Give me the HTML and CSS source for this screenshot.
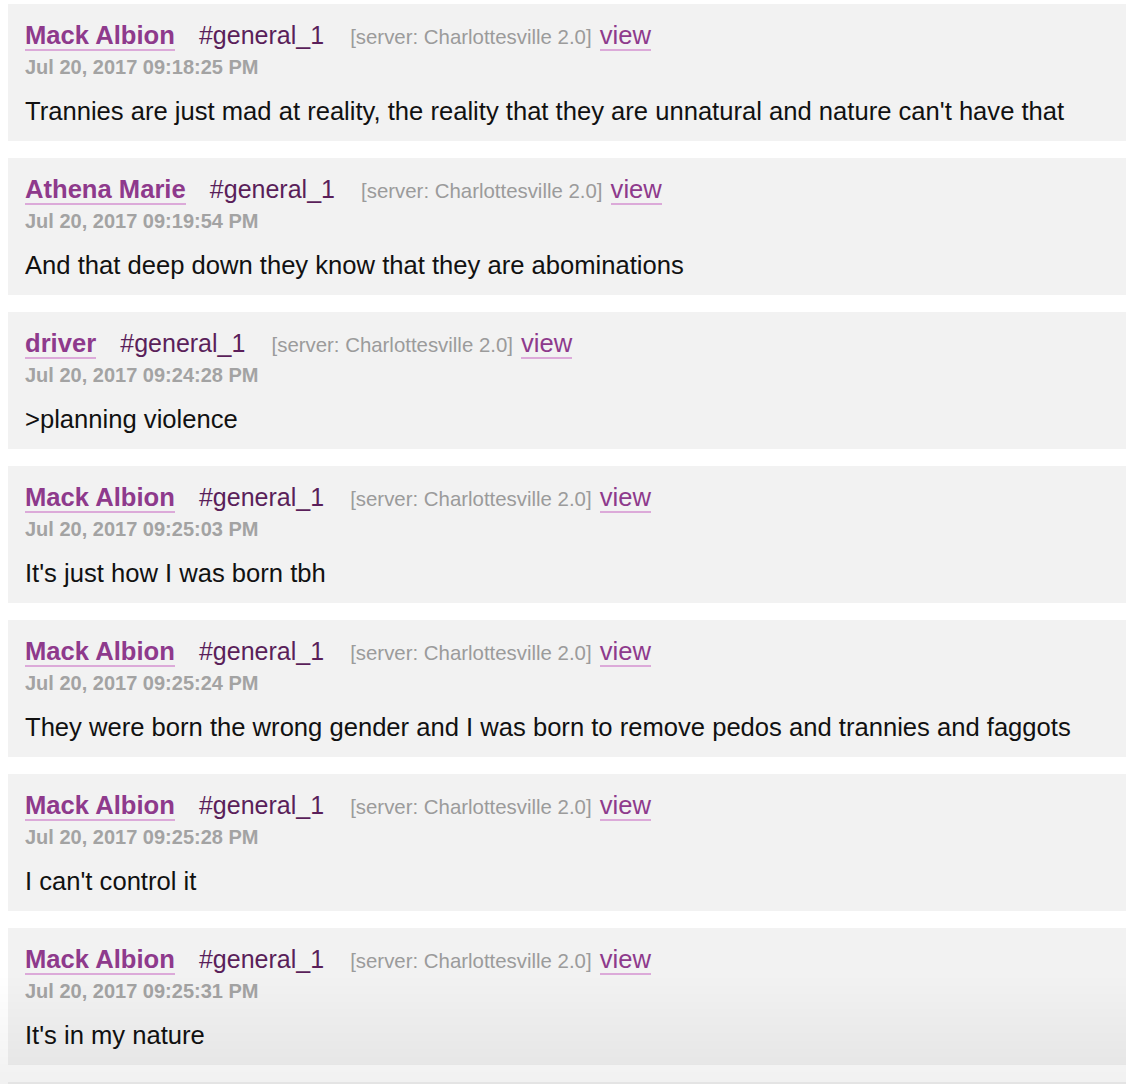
FILE: index.html
```html
<!DOCTYPE html>
<html lang="en">
<head>
    <meta charset="UTF-8">
    <meta name="viewport" content="width=device-width, initial-scale=1.0">
    <title>Discord leaks - #general_1</title>
    <link rel="stylesheet" href="styles.css">
</head>
<body>
    <div class="messages">
        <div class="msg">
            <div class="msg-head">
                <a class="author" href="#">Mack Albion</a>
                <span class="channel">#general_1</span>
                <span class="server">[server: Charlottesville 2.0]</span>
                <a class="view" href="#">view</a>
            </div>
            <div class="date">Jul 20, 2017 09:18:25 PM</div>
            <div class="body">Trannies are just mad at reality, the reality that they are unnatural and nature can't have that</div>
        </div>

        <div class="msg">
            <div class="msg-head">
                <a class="author" href="#">Athena Marie</a>
                <span class="channel">#general_1</span>
                <span class="server">[server: Charlottesville 2.0]</span>
                <a class="view" href="#">view</a>
            </div>
            <div class="date">Jul 20, 2017 09:19:54 PM</div>
            <div class="body">And that deep down they know that they are abominations</div>
        </div>

        <div class="msg">
            <div class="msg-head">
                <a class="author" href="#">driver</a>
                <span class="channel">#general_1</span>
                <span class="server">[server: Charlottesville 2.0]</span>
                <a class="view" href="#">view</a>
            </div>
            <div class="date">Jul 20, 2017 09:24:28 PM</div>
            <div class="body">&gt;planning violence</div>
        </div>

        <div class="msg">
            <div class="msg-head">
                <a class="author" href="#">Mack Albion</a>
                <span class="channel">#general_1</span>
                <span class="server">[server: Charlottesville 2.0]</span>
                <a class="view" href="#">view</a>
            </div>
            <div class="date">Jul 20, 2017 09:25:03 PM</div>
            <div class="body">It's just how I was born tbh</div>
        </div>

        <div class="msg">
            <div class="msg-head">
                <a class="author" href="#">Mack Albion</a>
                <span class="channel">#general_1</span>
                <span class="server">[server: Charlottesville 2.0]</span>
                <a class="view" href="#">view</a>
            </div>
            <div class="date">Jul 20, 2017 09:25:24 PM</div>
            <div class="body">They were born the wrong gender and I was born to remove pedos and trannies and faggots</div>
        </div>

        <div class="msg">
            <div class="msg-head">
                <a class="author" href="#">Mack Albion</a>
                <span class="channel">#general_1</span>
                <span class="server">[server: Charlottesville 2.0]</span>
                <a class="view" href="#">view</a>
            </div>
            <div class="date">Jul 20, 2017 09:25:28 PM</div>
            <div class="body">I can't control it</div>
        </div>

        <div class="msg">
            <div class="msg-head">
                <a class="author" href="#">Mack Albion</a>
                <span class="channel">#general_1</span>
                <span class="server">[server: Charlottesville 2.0]</span>
                <a class="view" href="#">view</a>
            </div>
            <div class="date">Jul 20, 2017 09:25:31 PM</div>
            <div class="body">It's in my nature</div>
        </div>

        <!-- next message, only its top edge is on screen -->
        <div class="msg"></div>
    </div>

    <div class="fade"></div>
</body>
</html>
```

FILE: styles.css
```css
* {
    margin: 0;
    padding: 0;
    box-sizing: border-box;
}

body {
    font-family: "Liberation Sans", Arial, sans-serif;
    background: #fff;
    color: #111;
    overflow: hidden;
}

.messages {
    padding: 4px 0 0 8px;
}

.msg {
    background: #f2f2f2;
    padding: 16px 17px 15px;
    margin-bottom: 17px;
    height: 137px;
}

.msg-head {
    font-size: 25.6px;
    line-height: 30px;
    white-space: nowrap;
}

.author {
    color: #8e3a8c;
    font-weight: bold;
    text-decoration: none;
    border-bottom: 2px solid #dcaad9;
    margin-right: 17px;
}

.channel {
    color: #5a1f5a;
    font-size: 25px;
    margin-right: 19px;
}

.server {
    color: #9b9b9b;
    font-size: 20.4px;
    margin-right: 1px;
}

.view {
    color: #8e3a8c;
    text-decoration: none;
    border-bottom: 2px solid #dcaad9;
}

.date {
    color: #a3a3a3;
    font-weight: bold;
    font-size: 20px;
    line-height: 22px;
    margin-top: 4px;
}

.body {
    font-size: 25.6px;
    line-height: 30px;
    margin-top: 18px;
    white-space: nowrap;
}

/* bottom of the page fades out */
.fade {
    position: fixed;
    left: 0;
    right: 0;
    bottom: 0;
    height: 110px;
    background: linear-gradient(to bottom, rgba(0, 0, 0, 0), rgba(0, 0, 0, 0.055));
    pointer-events: none;
}
```
